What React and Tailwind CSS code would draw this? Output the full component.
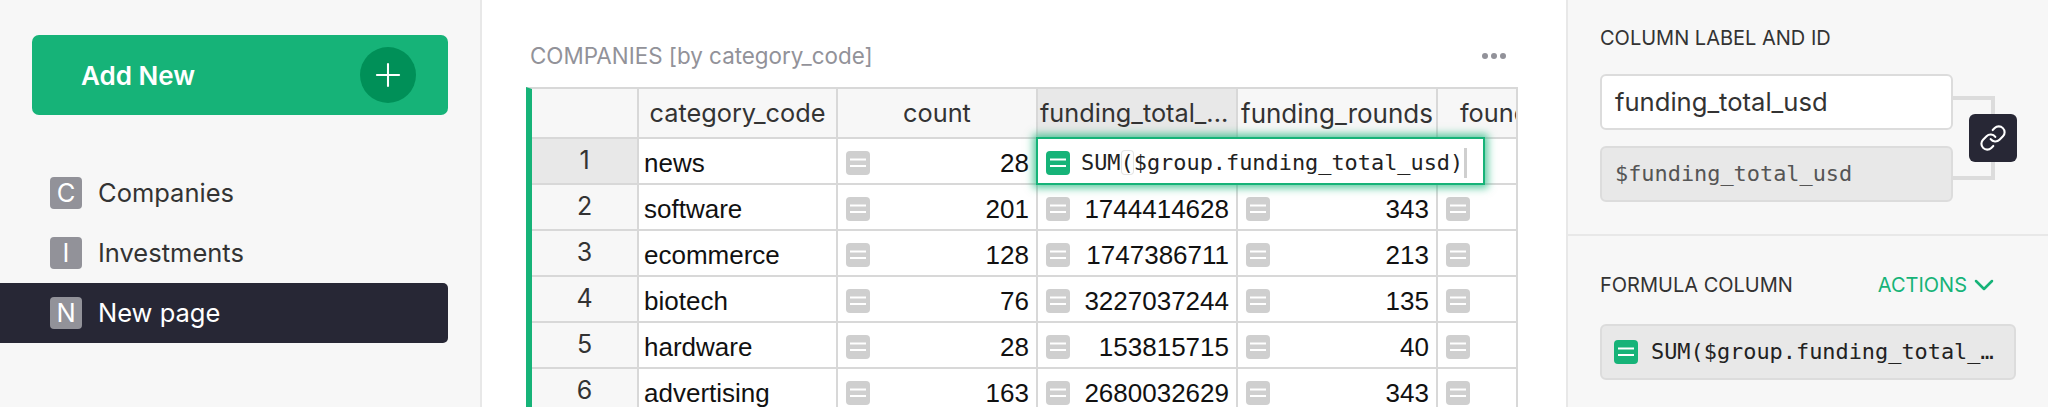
import React from 'react';
import { Plus, Link, ChevronDown } from 'lucide-react';

const rows = [
  ['news', 28, null, null],
  ['software', 201, 1744414628, 343],
  ['ecommerce', 128, 1747386711, 213],
  ['biotech', 76, 3227037244, 135],
  ['hardware', 28, 153815715, 40],
  ['advertising', 163, 2680032629, 343],
];

const pages = [
  { letter: 'C', name: 'Companies' },
  { letter: 'I', name: 'Investments' },
  { letter: 'N', name: 'New page', active: true },
];

const EqIcon = ({ green }) => (
  <svg width="24" height="24" viewBox="0 0 24 24" className="shrink-0">
    <rect width="24" height="24" rx="4" fill={green ? '#16b378' : '#cfcfcf'} />
    <path d="M4 8.5h16M4 15h16" stroke="white" strokeWidth="2.2" />
  </svg>
);

const HeaderCell = ({ children, active, className = 'justify-center' }) => (
  <div className={`h-[50px] border-r-2 border-b-2 border-[#d8d8d8] flex items-center overflow-hidden whitespace-nowrap ${active ? 'bg-[#e8e8e8]' : 'bg-[#f7f7f7]'} ${className}`}>
    {children}
  </div>
);

const ValueCell = ({ value }) => (
  <div className="h-[46px] border-r-2 border-b-2 border-[#d8d8d8] bg-white flex items-center justify-between pl-[8px] pr-[7px] pt-[4px]">
    <EqIcon />
    <span>{value}</span>
  </div>
);

const SideLabel = ({ children }) => (
  <div className="text-[20px] leading-[24px] text-[#333]">{children}</div>
);

export default function App() {
  return (
    <div className="w-[2048px] h-[407px] overflow-hidden flex bg-white font-['Inter',sans-serif]">
      {/* left nav */}
      <aside className="w-[482px] shrink-0 bg-[#f7f7f7] border-r-2 border-[#e8e8e8] pt-[35px]">
        <button className="ml-[32px] w-[416px] h-[80px] rounded-[7px] bg-[#16b378] flex items-center justify-between pl-[49px] pr-[32px] text-white font-semibold text-[26px]">
          Add New
          <span className="w-[56px] h-[56px] rounded-full bg-[#009058] flex items-center justify-center">
            <Plus size={38} strokeWidth={1.3} />
          </span>
        </button>
        <nav className="mt-[48px] w-[448px]">
          {pages.map((p) => (
            <div key={p.name} className={`h-[60px] flex items-center gap-[16px] pl-[50px] text-[25.5px] rounded-r-[5px] ${p.active ? 'bg-[#272735] text-white' : 'text-[#333]'}`}>
              <span className="w-[32px] h-[32px] rounded-[4px] bg-[#929299] text-white flex items-center justify-center">{p.letter}</span>
              {p.name}
            </div>
          ))}
        </nav>
      </aside>

      {/* table */}
      <main className="flex-1 pl-[44px] pt-[41px]">
        <div className="w-[992px] h-[30px] flex items-center justify-between pl-[4px] pr-[12px] text-[22.4px] text-[#929299]">
          <span>COMPANIES [by category_code]</span>
          <span className="flex gap-[3px]">
            <i className="w-[6px] h-[6px] rounded-full bg-[#929299]" />
            <i className="w-[6px] h-[6px] rounded-full bg-[#929299]" />
            <i className="w-[6px] h-[6px] rounded-full bg-[#929299]" />
          </span>
        </div>
        <div className="mt-[16px] w-[992px] border-l-[6px] border-l-[#16b378] border-t-2 border-t-[#d8d8d8] grid grid-cols-[107px_199px_200px_200px_200px_80px] text-[26px] font-['Liberation_Sans',sans-serif] text-[#111]">
          <div className="contents font-['Inter',sans-serif] text-[25.3px] text-[#333]">
            <HeaderCell />
            <HeaderCell>category_code</HeaderCell>
            <HeaderCell>count</HeaderCell>
            <HeaderCell active className="pl-[2px]">funding_total_...</HeaderCell>
            <HeaderCell className="justify-center text-[26px]">funding_rounds</HeaderCell>
            <HeaderCell className="pl-[22px]">founded_at</HeaderCell>
          </div>
          {rows.map((r, i) => (
            <React.Fragment key={r[0]}>
              <div className={`h-[46px] border-r-2 border-b-2 border-[#d8d8d8] flex items-center justify-center font-['Inter',sans-serif] text-[25px] text-[#333] ${i === 0 ? 'bg-[#e8e8e8]' : 'bg-[#f7f7f7]'}`}>{i + 1}</div>
              <div className="h-[46px] border-r-2 border-b-2 border-[#d8d8d8] bg-white flex items-center pl-[5px] pt-[4px] overflow-hidden">{r[0]}</div>
              <ValueCell value={r[1]} />
              {i === 0 ? (
                <div className="relative h-[46px] border-r-2 border-b-2 border-[#d8d8d8] bg-white">
                  <div className="absolute z-10 left-[-2px] top-[-2px] w-[449px] h-[48px] bg-white border-2 border-[#16b378] shadow-[0_0_8px_3px_rgba(22,179,120,0.7)] flex items-center pl-[8px] pt-[4px] gap-[11px] font-['DejaVu_Sans_Mono',monospace] text-[21.9px] text-[#222]">
                    <EqIcon green />
                    <span className="whitespace-nowrap border-r-[3px] border-[#cfcfcf] leading-[30px] pr-px">
                      SUM<span className="rounded-[4px] shadow-[inset_0_0_0_1px_#e4e4e4]">(</span>$group.funding_total_usd)
                    </span>
                  </div>
                </div>
              ) : (
                <ValueCell value={r[2]} />
              )}
              {i === 0 ? (
                <div className="h-[46px] border-r-2 border-b-2 border-[#d8d8d8] bg-white" />
              ) : (
                <ValueCell value={r[3]} />
              )}
              <div className="h-[46px] border-r-2 border-b-2 border-[#d8d8d8] bg-white flex items-center pl-[8px] pt-[4px]">
                {i > 0 && <EqIcon />}
              </div>
            </React.Fragment>
          ))}
        </div>
      </main>

      {/* column settings */}
      <aside className="w-[482px] shrink-0 bg-[#f7f7f7] border-l-2 border-[#e8e8e8]">
        <div className="h-[236px] border-b-2 border-[#e8e8e8] pt-[26px] pl-[32px]">
          <SideLabel>COLUMN LABEL AND ID</SideLabel>
          <div className="relative mt-[24px] w-[353px] flex flex-col gap-[16px]">
            <div className="h-[56px] rounded-[6px] border-2 border-[#dcdcdc] bg-white flex items-center pl-[13px] text-[25.6px] text-[#333]">funding_total_usd</div>
            <div className="h-[56px] rounded-[6px] border-2 border-[#dcdcdc] bg-[#e8e8e8] flex items-center pl-[13px] font-['DejaVu_Sans_Mono',monospace] text-[21.9px] text-[#555]">$funding_total_usd</div>
            <div className="absolute left-[353px] top-[22px] w-[42px] h-[84px] border-y-4 border-r-4 border-[#dcdcdc]" />
            <div className="absolute left-[369px] top-[40px] w-[48px] h-[48px] rounded-[6px] bg-[#272735] text-white flex items-center justify-center">
              <Link size={28} strokeWidth={1.8} />
            </div>
          </div>
        </div>
        <div className="pt-[37px] pl-[32px]">
          <div className="w-[392px] flex items-center justify-between">
            <SideLabel>FORMULA COLUMN</SideLabel>
            <span className="flex items-center text-[20px] leading-[24px] text-[#16b378]">
              ACTIONS <ChevronDown size={32} strokeWidth={1.9} className="-my-1 -mr-[8px] ml-px" />
            </span>
          </div>
          <div className="mt-[27px] w-[416px] h-[56px] rounded-[6px] border-2 border-[#dcdcdc] bg-[#e8e8e8] flex items-center pl-[12px] pr-[20px] gap-[13px] font-['DejaVu_Sans_Mono',monospace] text-[21.9px] text-[#222]">
            <EqIcon green />
            <span className="truncate">SUM($group.funding_total_usd)</span>
          </div>
        </div>
      </aside>
    </div>
  );
}
